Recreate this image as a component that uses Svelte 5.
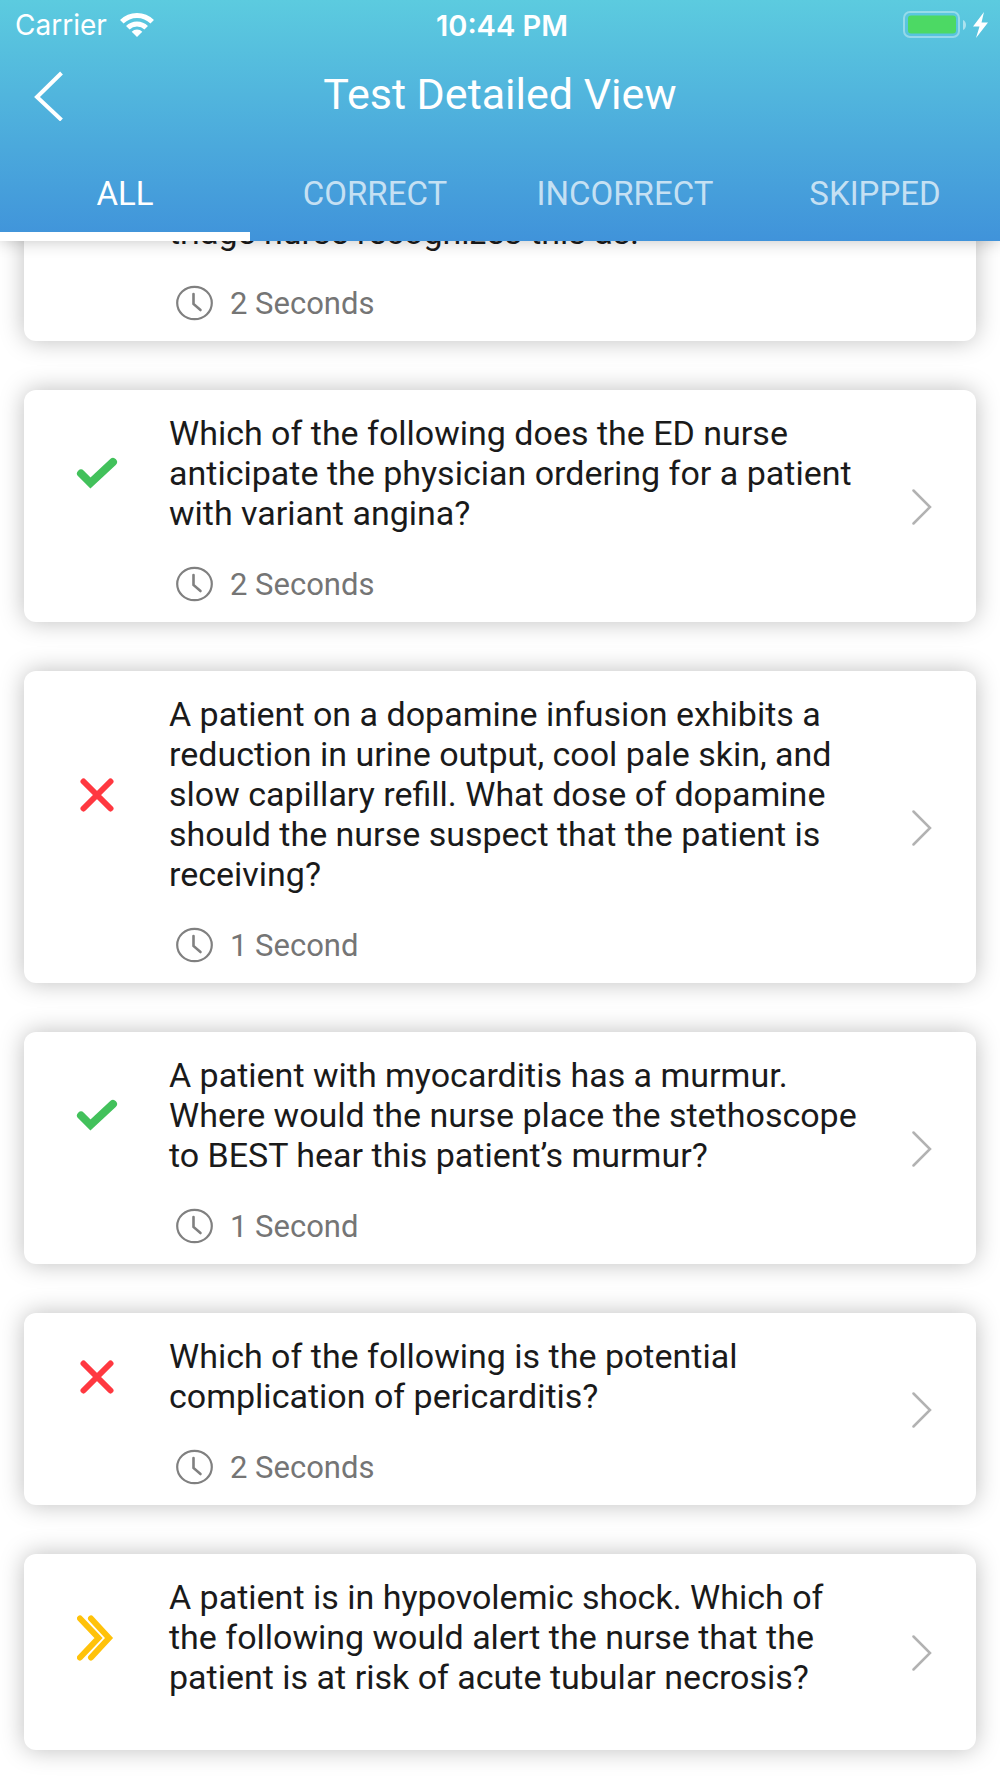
<script lang="ts">
  type Status = "correct" | "incorrect" | "skipped";

  interface Question {
    status?: Status;
    text: string;
    time?: string;
  }

  const tabs = ["all", "correct", "incorrect", "skipped"];

  const questions: Question[] = [
    { text: "triage nurse recognizes this as:", time: "2 Seconds" },
    {
      status: "correct",
      text: "Which of the following does the ED nurse anticipate the physician ordering for a patient with variant angina?",
      time: "2 Seconds",
    },
    {
      status: "incorrect",
      text: "A patient on a dopamine infusion exhibits a reduction in urine output, cool pale skin, and slow capillary refill. What dose of dopamine should the nurse suspect that the patient is receiving?",
      time: "1 Second",
    },
    {
      status: "correct",
      text: "A patient with myocarditis has a murmur. Where would the nurse place the stethoscope to BEST hear this patient’s murmur?",
      time: "1 Second",
    },
    {
      status: "incorrect",
      text: "Which of the following is the potential complication of pericarditis?",
      time: "2 Seconds",
    },
    {
      status: "skipped",
      text: "A patient is in hypovolemic shock. Which of the following would alert the nurse that the patient is at risk of acute tubular necrosis?",
    },
  ];

  let activeTab = $state("all");
  let visible = $derived(
    activeTab === "all" ? questions : questions.filter((q) => q.status === activeTab)
  );
</script>

<header class="header">
  <div class="status-bar">
    <div class="carrier">
      <span>Carrier</span>
      <svg width="36" height="26" viewBox="0 0 36 26" fill="none" stroke="#fff" stroke-width="5">
        <path d="M2.8 9.8a21.5 21.5 0 0 1 30.4 0" />
        <path d="M8.8 15.8a13 13 0 0 1 18.4 0" />
        <path d="M18 25l-5.3-5.3a7.5 7.5 0 0 1 10.6 0z" fill="#fff" stroke="none" />
      </svg>
    </div>
    <span class="clock">10:44 PM</span>
    <div class="power">
      <svg width="86" height="28" viewBox="0 0 86 28">
        <rect x="1" y="1" width="55" height="25" rx="6" fill="none" stroke="#fff" stroke-opacity="0.36" stroke-width="2" />
        <rect x="5" y="4.500" width="48" height="18" rx="3" fill="#4cd964" />
        <path d="M60 9c4 1.500 4 8.500 0 10z" fill="#fff" fill-opacity="0.5" />
        <path d="M81 1L70 15.500h6.500L73 27l12-15.500h-6.500z" fill="#fff" />
      </svg>
    </div>
  </div>

  <div class="title-bar">
    <button type="button" class="back" aria-label="Back">
      <svg width="30" height="50" viewBox="0 0 30 50" fill="none" stroke="#fff" stroke-width="4">
        <path d="M27.500 2L3 26l24.500 23" />
      </svg>
    </button>
    <h1>Test Detailed View</h1>
  </div>

  <nav class="tabs">
    {#each tabs as tab}
      <button
        type="button"
        class="tab"
        class:active={activeTab === tab}
        onclick={() => (activeTab = tab)}
      >
        {tab}
      </button>
    {/each}
  </nav>
</header>

<ul class="questions" class:scrolled={activeTab === "all"}>
  {#each visible as question}
    <li>
      <button type="button" class="card">
        <span class="status">
          {#if question.status === "correct"}
            <svg width="42" height="34" viewBox="0 0 42 34" fill="none" stroke="#42c15b" stroke-width="8" stroke-linecap="round">
              <path d="M5 16.500L14.500 26L37 5" />
            </svg>
          {:else if question.status === "incorrect"}
            <svg width="34" height="34" viewBox="0 0 34 34" fill="none" stroke="#ff3840" stroke-width="6" stroke-linecap="round">
              <path d="M3.500 3.500l27 27M30.500 3.500l-27 27" />
            </svg>
          {:else if question.status === "skipped"}
            <svg width="40" height="46" viewBox="0 0 40 46" fill="none" stroke="#ffc20a" stroke-width="6" stroke-linecap="round">
              <path d="M3 3.500L21.500 23L3 42.500M14 3.500L32 23L14 42.500" />
            </svg>
          {/if}
        </span>
        <span class="text">{question.text}</span>
        {#if question.time}
          <span class="time">
            <svg width="38" height="36" viewBox="0 0 38 36" fill="none" stroke="#808080" stroke-width="2.200" stroke-linecap="round">
              <ellipse cx="18.500" cy="18" rx="17.300" ry="16.200" />
              <path d="M17.500 9v10l7 6" stroke-width="2.600" />
            </svg>
            {question.time}
          </span>
        {/if}
        {#if question.status}
          <svg class="chevron" width="20" height="36" viewBox="0 0 20 36" fill="none" stroke="#b2b2b2" stroke-width="2.500" stroke-linecap="round">
            <path d="M1.500 1.500L18 18L1.500 34.500" />
          </svg>
        {/if}
      </button>
    </li>
  {/each}
</ul>

<style>
  :global(body) {
    margin: 0;
    background: #fff;
    font-family: Roboto, "Liberation Sans", sans-serif;
  }

  button {
    margin: 0;
    padding: 0;
    border: none;
    background: none;
    font: inherit;
    color: inherit;
    cursor: pointer;
  }

  svg {
    display: block;
    flex: none;
  }

  .header {
    position: sticky;
    top: 0;
    z-index: 1;
    color: #fff;
    background: linear-gradient(#5ccbdf, #4093da);
    box-shadow: 0 0 16px rgba(0, 0, 0, 0.24);
  }

  .status-bar {
    display: grid;
    grid-template-columns: 1fr auto 1fr;
    align-items: center;
    height: 50px;
    padding: 0 11px 0 15px;
    font-family: Inter, "Liberation Sans", sans-serif;
    font-size: 28px;
  }

  .carrier {
    display: flex;
    align-items: center;
    gap: 12px;
  }

  .clock {
    font-size: 29px;
    font-weight: 600;
  }

  .power {
    display: flex;
    justify-content: flex-end;
  }

  .title-bar {
    display: grid;
    grid-template-columns: 80px 1fr 80px;
    align-items: center;
    height: 92px;
  }

  .back {
    display: flex;
    justify-content: center;
    padding-left: 18px;
  }

  h1 {
    margin: 0 0 4px;
    text-align: center;
    font-size: 43px;
    font-weight: 400;
    line-height: 50px;
  }

  .tabs {
    display: grid;
    grid-template-columns: repeat(4, 1fr);
  }

  .tab {
    height: 99px;
    padding-top: 12px;
    border-bottom: 9px solid transparent;
    font-size: 33px;
    text-transform: uppercase;
    color: rgba(255, 255, 255, 0.7);
  }

  .tab.active {
    border-bottom-color: #fff;
    color: #fff;
  }

  .questions {
    display: flex;
    flex-direction: column;
    gap: 49px;
    margin: 0;
    padding: 49px 24px 28px;
    list-style: none;
  }

  /* the first card slides in under the header */
  .questions.scrolled {
    margin-top: -52px;
    padding-top: 0;
  }

  .card {
    display: grid;
    grid-template-columns: 145px 1fr 108px;
    width: 100%;
    padding: 23px 0 20px;
    border-radius: 12px;
    background: #fff;
    box-shadow: 0 0 25px rgba(0, 0, 0, 0.26);
    text-align: left;
  }

  .status {
    display: flex;
    align-items: center;
    justify-content: center;
    margin-bottom: 31px;
  }

  .text {
    margin-bottom: 33px;
    font-size: 34px;
    line-height: 40px;
    color: #1a1a1a;
  }

  .time {
    grid-column: 2;
    display: flex;
    align-items: center;
    gap: 16px;
    height: 36px;
    padding-left: 7px;
    font-size: 31px;
    color: #757575;
  }

  .chevron {
    grid-column: 3;
    grid-row: 1 / span 2;
    align-self: center;
    justify-self: center;
    margin-bottom: 2px;
  }
</style>
